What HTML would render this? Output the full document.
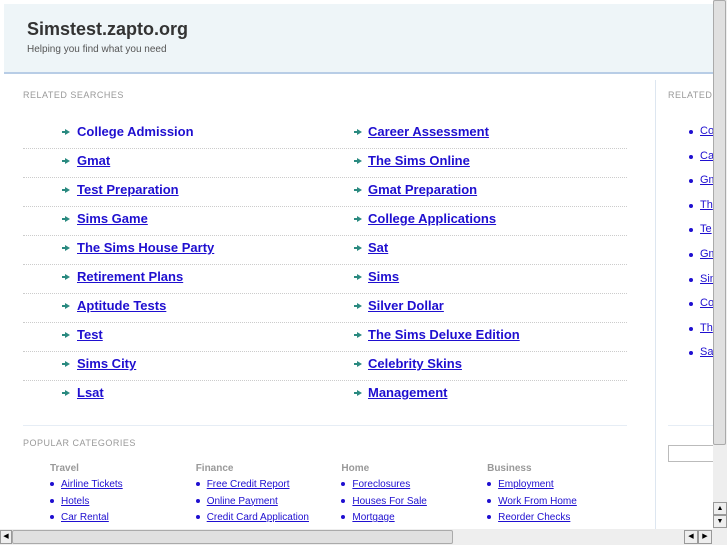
<!DOCTYPE html>
<html><head><style>
body{margin:0;width:727px;height:545px;overflow:hidden;background:#fff;font-family:"Liberation Sans",sans-serif;position:relative}
.a{position:absolute;white-space:nowrap}
#hd{position:absolute;left:4px;top:4px;width:709px;height:68px;background:#eef5f8;border-bottom:2px solid #b8cde6}
.lbl{font-size:9px;color:#999;letter-spacing:.5px}
.rs{font-size:13px;font-weight:bold;color:#1f0fd0;text-decoration:underline}
.ar{width:0;height:0;border-left:5px solid #2a8a80;border-top:3px solid transparent;border-bottom:3px solid transparent}
.ar:before{content:"";position:absolute;left:-8px;top:-1px;width:4px;height:2px;background:#2a8a80}
.dl{position:absolute;left:23px;width:604px;border-top:1px dotted #ccc;height:0}
.ch{font-size:10px;font-weight:bold;color:#999}
.cl{font-size:10px;color:#1f0fd0;text-decoration:underline}
.bu{width:4px;height:4px;border-radius:2px;background:#1f0fd0}
</style></head><body>
<div id="hd"></div>
<div class="a" style="left:27px;top:19px;font-size:18px;font-weight:bold;color:#333">Simstest.zapto.org</div>
<div class="a" style="left:27px;top:44px;font-size:10px;color:#555">Helping you find what you need</div>
<div style="position:absolute;left:655px;top:80px;width:1px;height:450px;background:#dde6f0"></div>
<div class="a lbl" style="left:23px;top:90px">RELATED SEARCHES</div>
<div class="a lbl" style="left:668px;top:90px">RELATED</div>
<div id="rows"></div>
<div style="position:absolute;left:23px;top:425px;width:604px;border-top:1px solid #e6edf5"></div>
<div style="position:absolute;left:668px;top:425px;width:45px;border-top:1px solid #e6edf5"></div>
<div style="position:absolute;left:668px;top:445px;width:50px;height:15px;border:1px solid #bbb"></div>
<div class="a lbl" style="left:23px;top:438px">POPULAR CATEGORIES</div>
<div id="cats"></div>
<div style="position:absolute;left:713px;top:0;width:14px;height:529px;background:#eee"></div>
<div style="position:absolute;left:713px;top:0;width:13px;height:445px;background:#e0e0e0;border:1px solid #aaa;border-radius:2px;box-sizing:border-box"></div>
<div style="position:absolute;left:713px;top:502px;width:14px;height:13px;border:1px solid #999;box-sizing:border-box;background:#eee;font-size:7px;text-align:center;line-height:11px">▲</div>
<div style="position:absolute;left:713px;top:515px;width:14px;height:13px;border:1px solid #999;box-sizing:border-box;background:#eee;font-size:7px;text-align:center;line-height:11px">▼</div>
<div style="position:absolute;left:0;top:529px;width:727px;height:16px;background:#eee"></div>
<div style="position:absolute;left:0;top:530px;width:12px;height:14px;border:1px solid #999;box-sizing:border-box;background:#eee;font-size:7px;line-height:12px;text-align:center">◀</div>
<div style="position:absolute;left:12px;top:530px;width:441px;height:14px;border:1px solid #aaa;box-sizing:border-box;background:#e0e0e0;border-radius:2px"></div>
<div style="position:absolute;left:684px;top:530px;width:14px;height:14px;border:1px solid #999;box-sizing:border-box;background:#eee;font-size:7px;line-height:12px;text-align:center">◀</div>
<div style="position:absolute;left:698px;top:530px;width:14px;height:14px;border:1px solid #999;box-sizing:border-box;background:#eee;font-size:7px;line-height:12px;text-align:center">▶</div>
<script>
var L=["College Admission","Gmat","Test Preparation","Sims Game","The Sims House Party","Retirement Plans","Aptitude Tests","Test","Sims City","Lsat"];
var R=["Career Assessment","The Sims Online","Gmat Preparation","College Applications","Sat","Sims","Silver Dollar","The Sims Deluxe Edition","Celebrity Skins","Management"];
var h="";
for(var i=0;i<10;i++){var y=124+i*29;
h+='<div class="a ar" style="left:65px;top:'+(y+5)+'px"></div><div class="a rs" style="left:77px;top:'+y+'px;'+(i==0?'text-decoration:none':'')+'">'+L[i]+'</div>';
h+='<div class="a ar" style="left:357px;top:'+(y+5)+'px"></div><div class="a rs" style="left:368px;top:'+y+'px">'+R[i]+'</div>';
if(i<9)h+='<div class="dl" style="top:'+(y+24)+'px"></div>';}
var S=["Co","Ca","Gm","Th","Te","Gm","Sim","Co","Th","Sa"];
for(var i=0;i<10;i++){var y=125+i*24.6;h+='<div class="a bu" style="left:689px;top:'+(y+5)+'px"></div><div class="a cl" style="left:700px;top:'+y+'px;font-size:11px">'+S[i]+'</div>';}
document.getElementById('rows').innerHTML=h;
var C=[["Travel","Airline Tickets","Hotels","Car Rental"],["Finance","Free Credit Report","Online Payment","Credit Card Application"],["Home","Foreclosures","Houses For Sale","Mortgage"],["Business","Employment","Work From Home","Reorder Checks"]];
var g="";for(var c=0;c<4;c++){var x=50+c*145.7;g+='<div class="a ch" style="left:'+x+'px;top:463px">'+C[c][0]+'</div>';
for(var j=1;j<4;j++){var y=479+(j-1)*16.5;g+='<div class="a bu" style="left:'+x+'px;top:'+(y+3)+'px"></div><div class="a cl" style="left:'+(x+11)+'px;top:'+y+'px">'+C[c][j]+'</div>';}}
document.getElementById('cats').innerHTML=g;
</script>
</body></html>
